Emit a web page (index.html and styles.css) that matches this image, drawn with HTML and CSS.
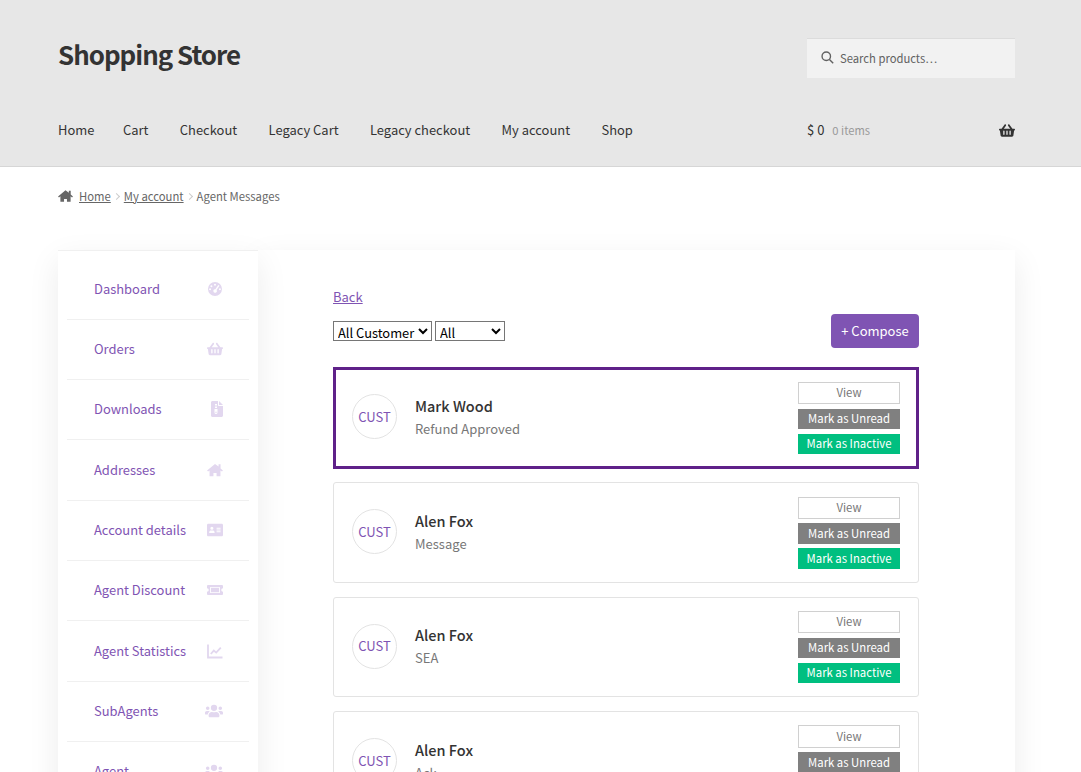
FILE: index.html
```html
<!DOCTYPE html>
<html lang="en">
<head>
    <meta charset="UTF-8">
    <meta name="viewport" content="width=device-width, initial-scale=1.0">
    <title>Agent Messages - Shopping Store</title>
    <link rel="stylesheet" href="styles.css">
</head>
<body>

    <!-- Site header -->
    <header class="site-header">
        <div class="header-top">
            <div class="site-title">Shopping Store</div>
            <div class="search-box">
                <svg class="search-icon" viewBox="0 0 16 16"><circle cx="6.5" cy="6.5" r="5.2"/><path d="M10.4 10.4l4.6 4.6"/></svg>
                <span>Search products…</span>
            </div>
        </div>
        <div class="header-bottom">
            <nav class="main-nav">
                <a href="#">Home</a>
                <a href="#">Cart</a>
                <a href="#">Checkout</a>
                <a href="#">Legacy Cart</a>
                <a href="#">Legacy checkout</a>
                <a href="#">My account</a>
                <a href="#">Shop</a>
            </nav>
            <div class="mini-cart">
                <span class="cart-amount">$ 0</span>
                <span class="cart-count">0 items</span>
                <svg class="cart-icon" viewBox="0 0 576 512"><use href="#i-basket"/></svg>
            </div>
        </div>
    </header>

    <!-- Breadcrumb -->
    <div class="breadcrumb">
        <svg class="crumb-home" viewBox="0 0 576 512"><use href="#i-home"/></svg>
        <a href="#">Home</a>
        <span class="crumb-sep"></span>
        <a href="#">My account</a>
        <span class="crumb-sep"></span>
        <span>Agent Messages</span>
    </div>

    <div class="account">
        <!-- Account menu -->
        <aside class="account-nav">
            <a class="nav-row" href="#">Dashboard
                <svg class="nav-icon" viewBox="0 0 24 24"><path fill-rule="evenodd" d="M12 1.5a10.5 10.5 0 1 0 0 21 10.5 10.5 0 0 0 0-21zM12 4.2a1.5 1.5 0 1 1 0 3 1.5 1.5 0 0 1 0-3zM6.6 6.5a1.5 1.5 0 1 1 0 3 1.5 1.5 0 0 1 0-3zM4.6 11a1.5 1.5 0 1 1 0 3 1.5 1.5 0 0 1 0-3zM19.4 11a1.5 1.5 0 1 1 0 3 1.5 1.5 0 0 1 0-3zM17 6l1.7 1.2-4.4 6.4a2.6 2.6 0 1 1-1.8-1.2z"/></svg>
            </a>
            <a class="nav-row" href="#">Orders
                <svg class="nav-icon" viewBox="0 0 576 512"><use href="#i-basket"/></svg>
            </a>
            <a class="nav-row" href="#">Downloads
                <svg class="nav-icon" viewBox="0 0 384 512" preserveAspectRatio="xMaxYMid"><path fill-rule="evenodd" d="M48 0h176v128c0 18 14 32 32 32h128v304c0 27-21 48-48 48H48c-27 0-48-21-48-48V48C0 21 21 0 48 0zM256 0l128 128H256zM128 96v48h64V96zM128 176v48h64v-48zM112 256v112a48 48 0 0 0 96 0V256zM136 344h48v32h-48z"/></svg>
            </a>
            <a class="nav-row" href="#">Addresses
                <svg class="nav-icon" viewBox="0 0 576 512"><use href="#i-home"/></svg>
            </a>
            <a class="nav-row" href="#">Account details
                <svg class="nav-icon" viewBox="0 0 576 512"><path fill-rule="evenodd" d="M48 32h480c27 0 48 21 48 48v352c0 27-21 48-48 48H48c-27 0-48-21-48-48V80c0-27 21-48 48-48zM176 136a56 56 0 1 0 0 112 56 56 0 0 0 0-112zM80 368h192v-32c0-40-32-64-64-64h-64c-32 0-64 24-64 64zM344 176v32h144v-32zM344 240v32h144v-32zM344 304v32h144v-32z"/></svg>
            </a>
            <a class="nav-row" href="#">Agent Discount
                <svg class="nav-icon" viewBox="0 0 576 512"><path fill-rule="evenodd" d="M32 80h512c18 0 32 14 32 32v80a48 48 0 0 0 0 128v80c0 18-14 32-32 32H32c-18 0-32-14-32-32v-80a48 48 0 0 0 0-128v-80c0-18 14-32 32-32zM128 144c-9 0-16 7-16 16v192c0 9 7 16 16 16h320c9 0 16-7 16-16V160c0-9-7-16-16-16z M144 176h288v160H144z"/></svg>
            </a>
            <a class="nav-row" href="#">Agent Statistics
                <svg class="nav-icon nav-icon-line" viewBox="0 0 16 16"><path d="M1 1.5V14.5H15.5"/><path d="M3.8 11l3-3.4 2.4 2 4.6-5"/></svg>
            </a>
            <a class="nav-row" href="#">SubAgents
                <svg class="nav-icon nav-icon-wide" viewBox="0 0 640 512"><use href="#i-users"/></svg>
            </a>
            <a class="nav-row" href="#">Agent
                <svg class="nav-icon nav-icon-wide" viewBox="0 0 640 512"><use href="#i-users"/></svg>
            </a>
        </aside>

        <!-- Messages -->
        <main class="account-content">
            <a class="back-link" href="#">Back</a>
            <div class="toolbar">
                <div class="filters">
                    <select><option>All Customer</option></select>
                    <select class="filter-short"><option>All</option></select>
                </div>
                <a class="compose-btn" href="#">+ Compose</a>
            </div>

            <div class="message-card message-active">
                <div class="avatar">CUST</div>
                <div class="message-info">
                    <div class="message-name">Mark Wood</div>
                    <div class="message-sub">Refund Approved</div>
                </div>
                <div class="message-actions">
                    <a class="btn btn-view" href="#">View</a>
                    <a class="btn btn-unread" href="#">Mark as Unread</a>
                    <a class="btn btn-inactive" href="#">Mark as Inactive</a>
                </div>
            </div>

            <div class="message-card">
                <div class="avatar">CUST</div>
                <div class="message-info">
                    <div class="message-name">Alen Fox</div>
                    <div class="message-sub">Message</div>
                </div>
                <div class="message-actions">
                    <a class="btn btn-view" href="#">View</a>
                    <a class="btn btn-unread" href="#">Mark as Unread</a>
                    <a class="btn btn-inactive" href="#">Mark as Inactive</a>
                </div>
            </div>

            <div class="message-card">
                <div class="avatar">CUST</div>
                <div class="message-info">
                    <div class="message-name">Alen Fox</div>
                    <div class="message-sub">SEA</div>
                </div>
                <div class="message-actions">
                    <a class="btn btn-view" href="#">View</a>
                    <a class="btn btn-unread" href="#">Mark as Unread</a>
                    <a class="btn btn-inactive" href="#">Mark as Inactive</a>
                </div>
            </div>

            <div class="message-card">
                <div class="avatar">CUST</div>
                <div class="message-info">
                    <div class="message-name">Alen Fox</div>
                    <div class="message-sub">Ack</div>
                </div>
                <div class="message-actions">
                    <a class="btn btn-view" href="#">View</a>
                    <a class="btn btn-unread" href="#">Mark as Unread</a>
                    <a class="btn btn-inactive" href="#">Mark as Inactive</a>
                </div>
            </div>
        </main>
    </div>

    <!-- Shared icons -->
    <svg class="icon-defs" aria-hidden="true">
        <defs>
            <path id="i-basket" d="M576 216v16c0 13.255-10.745 24-24 24h-8l-26.113 182.788C514.509 462.435 494.257 480 470.37 480H105.63c-23.887 0-44.139-17.565-47.518-41.212L32 256h-8c-13.255 0-24-10.745-24-24v-16c0-13.255 10.745-24 24-24h67.341l106.78-146.821c10.395-14.292 30.407-17.453 44.701-7.058 14.293 10.395 17.453 30.408 7.058 44.701L170.477 192h235.046L326.12 82.821c-10.395-14.292-7.234-34.306 7.059-44.701 14.291-10.395 34.306-7.235 44.701 7.058L484.659 192H552c13.255 0 24 10.745 24 24zM312 392V280c0-13.255-10.745-24-24-24s-24 10.745-24 24v112c0 13.255 10.745 24 24 24s24-10.745 24-24zm112 0V280c0-13.255-10.745-24-24-24s-24 10.745-24 24v112c0 13.255 10.745 24 24 24s24-10.745 24-24zm-224 0V280c0-13.255-10.745-24-24-24s-24 10.745-24 24v112c0 13.255 10.745 24 24 24s24-10.745 24-24z"/>
            <path id="i-home" d="M288 36L2 272l36 42 54-44v210h140V368h112v112h140V270l54 44 36-42-86-71V52h-72v82z"/>
            <path id="i-users" d="M96 224a64 64 0 1 0 0-128 64 64 0 0 0 0 128zm448 0a64 64 0 1 0 0-128 64 64 0 0 0 0 128zm32 32h-64c-18 0-34 7-45 19 40 22 69 62 75 109h66c18 0 32-14 32-32v-32c0-35-29-64-64-64zm-256 0a112 112 0 1 0 0-224 112 112 0 0 0 0 224zm77 32h-8c-21 10-44 16-69 16s-48-6-69-16h-8c-64 0-115 52-115 115v29c0 27 21 48 48 48h288c27 0 48-21 48-48v-29c0-63-51-115-115-115zm-224-13c-11-12-27-19-45-19H64c-35 0-64 29-64 64v32c0 18 14 32 32 32h66c6-47 35-87 75-109z"/>
        </defs>
    </svg>

</body>
</html>
```
FILE: styles.css
```css
/* Page */
html, body {
    margin: 0;
    padding: 0;
    height: 772px;
    overflow: hidden;
}
body {
    background: #fff;
    font-family: "Noto Sans CJK SC", "Open Sans", sans-serif;
    font-size: 13px;
    line-height: 22px;
    color: #43454b;
}
a {
    color: inherit;
    text-decoration: none;
}
.icon-defs {
    display: none;
}

/* Site header */
.site-header {
    box-sizing: border-box;
    height: 167px;
    padding: 38px 66px 0 58px;
    background: #e7e7e7;
    border-bottom: 1px solid #d6d6d6;
}
.header-top {
    display: flex;
    justify-content: space-between;
    align-items: center;
}
.site-title {
    margin-bottom: 8px;
    font-size: 25.9px;
    line-height: 32px;
    font-weight: 700;
    letter-spacing: -1px;
    color: #333;
}
.search-box {
    box-sizing: border-box;
    width: 208px;
    height: 40px;
    display: flex;
    align-items: center;
    gap: 6px;
    padding: 0 0 2px 14px;
    background: #f2f2f2;
    border-top: 1px solid #dcdcdc;
    font-size: 11.25px;
    color: #616161;
}
.search-icon {
    width: 13px;
    height: 13px;
    fill: none;
    stroke: #616161;
    stroke-width: 1.7;
}
.header-bottom {
    display: flex;
    justify-content: space-between;
    align-items: center;
    margin-top: 41px;
}
.main-nav {
    display: flex;
    gap: 31.4px;
    font-size: 12.95px;
    color: #333;
}
.main-nav a:first-child {
    margin-right: -2.8px;
}
.mini-cart {
    width: 208px;
    display: flex;
    align-items: center;
    font-size: 13px;
    color: #333;
}
.cart-count {
    margin-left: 8px;
    font-size: 11.2px;
    color: #999;
}
.cart-icon {
    width: 16px;
    height: 15px;
    margin-left: auto;
    fill: #333;
}

/* Breadcrumb */
.breadcrumb {
    display: flex;
    align-items: center;
    margin: 18px 0 0 58px;
    font-size: 11.3px;
    color: #666;
}
.breadcrumb a {
    text-decoration: underline;
}
.crumb-home {
    width: 15px;
    height: 14px;
    margin-right: 6px;
    fill: #666;
}
.crumb-sep {
    width: 4px;
    height: 4px;
    margin: 0 5px 0 3px;
    border-top: 1px solid #ccc;
    border-right: 1px solid #ccc;
    transform: rotate(45deg);
}

/* Account layout */
.account {
    display: flex;
    width: 957px;
    margin: 43px 0 0 58px;
}
.account-nav {
    box-sizing: border-box;
    flex: 0 0 200px;
    height: 600px;
    padding: 8.34px 9px 0;
    background: #fff;
    border-top: 1px solid #f0f0f0;
    box-shadow: 0 10px 30px rgba(0, 0, 0, 0.08);
    position: relative;
    z-index: 1;
}
.nav-row {
    box-sizing: border-box;
    height: 60.33px;
    display: flex;
    align-items: center;
    justify-content: space-between;
    padding: 0 26px 0.6px 27px;
    border-bottom: 1px solid #f0f0f0;
    font-size: 12.95px;
    color: #7f54b3;
}
.nav-icon {
    width: 16px;
    height: 16px;
    fill: #e2d7ef;
}
.nav-icon-wide {
    width: 18px;
}
.nav-icon-line {
    fill: none;
    stroke: #e2d7ef;
    stroke-width: 1.8;
}
.account-content {
    box-sizing: border-box;
    flex: 1;
    height: 600px;
    padding: 36px 96px 0 75px;
    box-shadow: 0 10px 30px rgba(0, 0, 0, 0.08);
}
.back-link {
    display: block;
    font-size: 13px;
    line-height: 22px;
    color: #7f54b3;
    text-decoration: underline;
}

/* Filters and compose */
.toolbar {
    display: flex;
    justify-content: space-between;
    align-items: flex-start;
    margin-top: 13px;
}
.filters {
    display: flex;
    gap: 3px;
}
select {
    height: 20px;
    padding: 0 0 1px;
    border: 1px solid #767676;
    background-color: #fff;
    font-family: inherit;
    font-size: 12.9px;
    color: #000;
}
.filter-short {
    width: 70px;
}
.compose-btn {
    box-sizing: border-box;
    width: 88px;
    height: 34px;
    display: flex;
    align-items: center;
    justify-content: center;
    margin-top: -7px;
    background: #7f54b3;
    border-radius: 4px;
    font-size: 13px;
    color: #fff;
}

/* Message cards */
.message-card {
    box-sizing: border-box;
    height: 100.6px;
    display: flex;
    align-items: center;
    margin-top: 13.9px;
    padding: 0 18px;
    border: 1px solid #e3e3e3;
    border-radius: 3px;
}
.message-active {
    height: 102px;
    margin: 19px 0 -0.5px;
    padding: 0 16px;
    border: 3px solid #5f2189;
    border-radius: 0;
}
.avatar {
    box-sizing: border-box;
    width: 45px;
    height: 45px;
    display: flex;
    align-items: center;
    justify-content: center;
    margin-bottom: 2px;
    border: 1px solid #e3e3e3;
    border-radius: 50%;
    font-size: 13px;
    color: #7f54b3;
}
.message-active .avatar {
    margin-bottom: 3px;
}
.message-info {
    flex: 1;
    margin-left: 18px;
    padding-bottom: 2px;
}
.message-name {
    font-size: 14.5px;
    line-height: 23px;
    font-weight: 500;
    color: #333;
}
.message-sub {
    margin-top: 1px;
    font-size: 13px;
    line-height: 22px;
    color: #777;
}
.message-actions {
    width: 102px;
    display: flex;
    flex-direction: column;
    gap: 4.4px;
}
.btn {
    box-sizing: border-box;
    height: 20.6px;
    display: flex;
    align-items: center;
    justify-content: center;
    padding-bottom: 2px;
    font-size: 11.35px;
    color: #fff;
}
.btn-view {
    height: 22.4px;
    border: 1px solid #d0d0d0;
    color: #777;
}
.btn-unread {
    background: #808080;
}
.btn-inactive {
    background: #00bf80;
}
```
